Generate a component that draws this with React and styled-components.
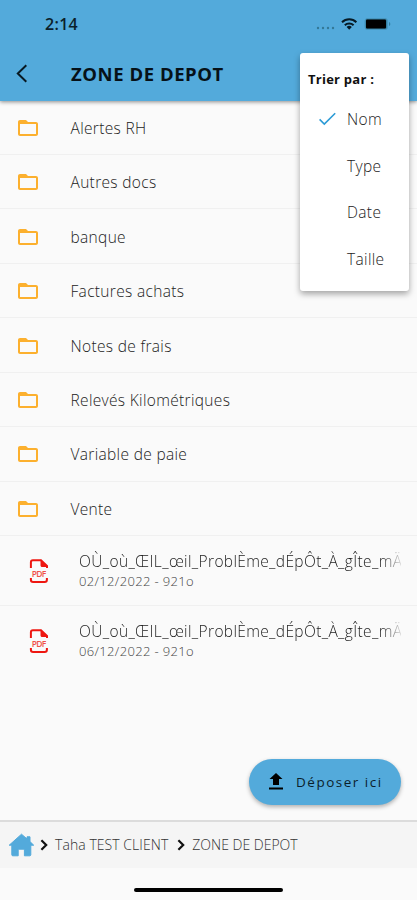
import React from 'react';
import styled, { createGlobalStyle } from 'styled-components';

const GlobalStyle = createGlobalStyle`
  * {
    box-sizing: border-box;
  }
  body {
    margin: 0;
    background: #fafafa;
    font-family: 'Open Sans', 'Noto Sans', sans-serif;
  }
  svg {
    flex: none;
  }
`;

const Screen = styled.div`
  position: relative;
  display: flex;
  flex-direction: column;
  width: 417px;
  height: 900px;
  overflow: hidden;
  background: #fafafa;
  white-space: nowrap;
`;

const Header = styled.header`
  flex: none;
  height: 100.6px;
  background: #53aadb;
  box-shadow: 0 1px 4px rgba(0, 0, 0, 0.45);
  z-index: 1;
`;

const StatusBar = styled.div`
  display: flex;
  align-items: center;
  justify-content: space-between;
  height: 48px;
  padding: 0 26px 0 45px;
`;

const Time = styled.span`
  font-size: 16px;
  font-weight: 600;
  letter-spacing: 0.3px;
  color: #0b1f2b;
`;

const TitleBar = styled.div`
  display: flex;
  align-items: center;
  height: 52px;
  padding-left: 15px;
`;

const Title = styled.h1`
  margin: 0 0 0 43px;
  font-size: 18.5px;
  line-height: 50px;
  font-weight: 700;
  letter-spacing: 0.55px;
  color: #061118;
`;

const List = styled.main`
  flex: 1;
`;

const FolderRow = styled.div`
  display: flex;
  align-items: center;
  height: 54.45px;
  padding: 1px 0 0 18px;
  border-bottom: 1px solid #f0f0f0;
`;

const FolderName = styled.span`
  margin-left: 32.5px;
  font-size: 15.5px;
  font-weight: 300;
  letter-spacing: 0.33px;
  color: #222222;
`;

const FileRow = styled.div`
  display: flex;
  align-items: center;
  height: 70px;
  padding: 1px 16px 0 29px;
  border-bottom: 1px solid ${(props) => (props.$last ? 'transparent' : '#f0f0f0')};
`;

const FileText = styled.div`
  flex: 1;
  min-width: 0;
  margin: -2px 0 0 30px;
`;

const FileName = styled.div`
  overflow: hidden;
  font-size: 15.5px;
  line-height: 21px;
  font-weight: 300;
  letter-spacing: 0.36px;
  color: #222222;
  mask-image: linear-gradient(to right, #000 94%, transparent 101%);
`;

const FileInfo = styled.div`
  font-size: 13px;
  line-height: 18px;
  font-weight: 300;
  letter-spacing: 0.35px;
  color: #444444;
`;

const UploadButton = styled.button`
  position: absolute;
  right: 16px;
  bottom: 95px;
  display: flex;
  align-items: center;
  width: 152px;
  height: 46px;
  padding: 0 0 0 20px;
  border: 0;
  border-radius: 23px;
  background: #53aadb;
  box-shadow: 0 2px 4px rgba(0, 0, 0, 0.3);
  color: #0b1f2b;
  font-family: inherit;
  font-size: 13.5px;
  font-weight: 500;
  letter-spacing: 1.5px;
  white-space: nowrap;
  span {
    margin-left: 13px;
  }
`;

const Breadcrumb = styled.nav`
  display: flex;
  flex: none;
  align-items: center;
  height: 48px;
  padding: 0 0 1px 8px;
  border-top: 2px solid #dcdcdc;
  background: #f5f5f5;
`;

const Crumb = styled.span`
  margin: 0 9px 0 7px;
  font-size: 14px;
  font-weight: 300;
  letter-spacing: ${(props) => props.$spacing || 0}px;
  color: #333333;
`;

const HomeArea = styled.footer`
  display: flex;
  flex: none;
  justify-content: center;
  height: 32px;
  padding-top: 20px;
`;

const HomeIndicator = styled.div`
  width: 149px;
  height: 4px;
  border-radius: 2px;
  background: #000000;
`;

const SortMenu = styled.div`
  position: absolute;
  top: 53px;
  left: 300px;
  z-index: 2;
  width: 109px;
  height: 238px;
  padding-top: 3px;
  border-radius: 3px;
  background: #ffffff;
  box-shadow: 0 3px 6px rgba(0, 0, 0, 0.35);
`;

const SortTitle = styled.div`
  height: 40px;
  padding-left: 8px;
  font-size: 13px;
  line-height: 46px;
  font-weight: 700;
  letter-spacing: 0.25px;
  color: #111111;
`;

const SortItem = styled.div`
  display: flex;
  align-items: center;
  height: 46.6px;
  padding-left: 18px;
  font-size: 15.5px;
  font-weight: 300;
  letter-spacing: 0.35px;
  color: #222222;
`;

const CheckSlot = styled.span`
  display: flex;
  width: 29px;
`;

const StatusIcons = () => (
  <svg width="75" height="16" viewBox="0 0 75 16">
    <g fill="#347897">
      <circle cx="2" cy="12" r="1.2" />
      <circle cx="7" cy="12" r="1.2" />
      <circle cx="12" cy="12" r="1.2" />
      <circle cx="17" cy="12" r="1.2" />
    </g>
    <g fill="none" stroke="#061a25" strokeWidth="2">
      <path d="M26 6.2a10.5 10.5 0 0 1 14.4 0" />
      <path d="M28.8 9.3a6.4 6.4 0 0 1 8.8 0" />
    </g>
    <path d="M33.2 13.8l-2.6-2.7a3.7 3.7 0 0 1 5.2 0z" fill="#061a25" />
    <rect x="49" y="2.5" width="22.5" height="11" rx="2.5" fill="#347f9f" stroke="#4796bf" />
    <rect x="50" y="3.6" width="20" height="8.8" rx="1" fill="#000" />
    <path d="M73 6v4c1.8-.6 1.8-3.4 0-4z" fill="#347f9f" />
  </svg>
);

const BackIcon = () => (
  <svg width="13" height="20" viewBox="0 0 13 20" fill="none" stroke="#081922" strokeWidth="2">
    <path d="M11.3 1.3L2.8 9.5l8.5 8.2" />
  </svg>
);

const FolderIcon = () => (
  <svg width="20" height="16" viewBox="0 0 20 16">
    <path
      fill="#fcb02e"
      fillRule="evenodd"
      d="M2 0h6l2 2h8c1.1 0 2 .9 2 2v10c0 1.1-.9 2-2 2H2c-1.1 0-2-.9-2-2V2C0 .9.9 0 2 0zm0 4v10h16V4z"
    />
  </svg>
);

const PdfIcon = () => (
  <svg width="20" height="25" viewBox="0 0 20 25">
    <g fill="none" stroke="#ee1711" strokeWidth="2">
      <path d="M1.9 9V3.2c0-1.2.8-2 2-2h8.1L18 7v2" />
      <path d="M1.9 19v1.8c0 1.5.9 2.3 2.2 2.3h11.6c1.3 0 2.2-.8 2.2-2.3V19" />
    </g>
    <path d="M11.5.6l7.4 7.4h-5.6c-1.2 0-1.8-.8-1.8-1.8z" fill="#ee1711" />
    <text
      x="10"
      y="17.6"
      textAnchor="middle"
      fontFamily="Open Sans, sans-serif"
      fontSize="8.5"
      fontWeight="600"
      textLength="14.5"
      fill="#ef5048"
    >
      PDF
    </text>
  </svg>
);

const CheckIcon = () => (
  <svg width="19" height="14" viewBox="0 0 19 14" fill="none" stroke="#2c9bd6" strokeWidth="1.6">
    <path d="M1.6 7.4l4.7 4.7L17.2 1.2" />
  </svg>
);

const UploadIcon = () => (
  <svg width="14" height="18" viewBox="0 0 14 18" fill="#000">
    <path d="M4 12h6V6h3.5L7 0 .5 6H4zM0 14.5h14v2H0z" />
  </svg>
);

const HomeIcon = () => (
  <svg width="27" height="24" viewBox="0 0 27 24">
    <path
      d="M13.5 1.2L1.2 12.2h2.6v9.6c0 .6.4 1 1 1h5.4v-6.6h6.2v6.6h5.4c.6 0 1-.4 1-1v-9.6h2.9L22 8.6V3.8h-3v2.1z"
      fill="#53aadb"
      stroke="#53aadb"
      strokeLinejoin="round"
    />
  </svg>
);

const Chevron = styled.svg`
  margin-left: ${(props) => props.$gap || 0}px;
`;

const ChevronIcon = ({ gap }) => (
  <Chevron $gap={gap} width="8" height="12" viewBox="0 0 8 12" fill="none" stroke="#111" strokeWidth="2.2">
    <path d="M1.4 1.2L6.2 6l-4.8 4.8" />
  </Chevron>
);

const folders = [
  'Alertes RH',
  'Autres docs',
  'banque',
  'Factures achats',
  'Notes de frais',
  'Relevés Kilométriques',
  'Variable de paie',
  'Vente',
];

const fileName = 'OÙ_où_ŒIL_œil_ProblÈme_dÉpÔt_À_gÎte_mÄ';

const files = ['02/12/2022 - 921o', '06/12/2022 - 921o'];

const sorts = ['Nom', 'Type', 'Date', 'Taille'];

const App = () => {
  return (
    <Screen>
      <GlobalStyle />
      <Header>
        <StatusBar>
          <Time>2:14</Time>
          <StatusIcons />
        </StatusBar>
        <TitleBar>
          <BackIcon />
          <Title>ZONE DE DEPOT</Title>
        </TitleBar>
      </Header>

      <List>
        {folders.map((name) => (
          <FolderRow key={name}>
            <FolderIcon />
            <FolderName>{name}</FolderName>
          </FolderRow>
        ))}
        {files.map((info, i) => (
          <FileRow key={info} $last={i === files.length - 1}>
            <PdfIcon />
            <FileText>
              <FileName>{fileName}</FileName>
              <FileInfo>{info}</FileInfo>
            </FileText>
          </FileRow>
        ))}
      </List>

      <UploadButton>
        <UploadIcon />
        <span>Déposer ici</span>
      </UploadButton>

      <Breadcrumb>
        <HomeIcon />
        <ChevronIcon gap={5} />
        <Crumb $spacing={0.06}>Taha TEST CLIENT</Crumb>
        <ChevronIcon />
        <Crumb>ZONE DE DEPOT</Crumb>
      </Breadcrumb>
      <HomeArea>
        <HomeIndicator />
      </HomeArea>

      <SortMenu>
        <SortTitle>Trier par :</SortTitle>
        {sorts.map((name, i) => (
          <SortItem key={name}>
            <CheckSlot>{i === 0 && <CheckIcon />}</CheckSlot>
            {name}
          </SortItem>
        ))}
      </SortMenu>
    </Screen>
  );
};

export default App;
